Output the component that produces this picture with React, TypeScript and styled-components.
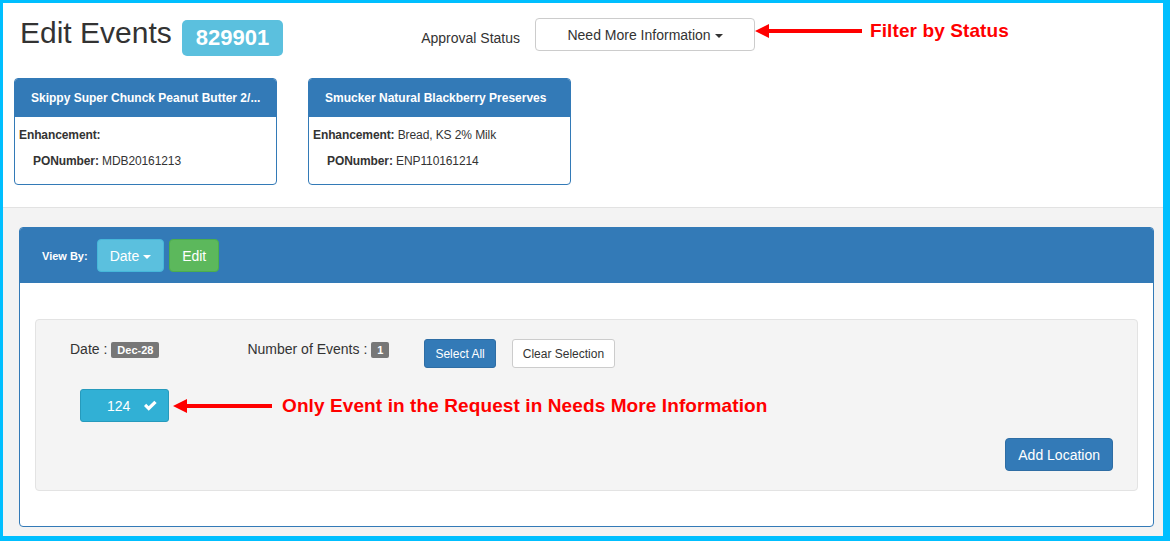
import React from 'react';
import styled, { createGlobalStyle } from 'styled-components';

const GlobalStyle = createGlobalStyle`
  html, body {
    margin: 0;
    padding: 0;
    background: #ffffff;
  }
  body {
    font-family: "Liberation Sans", Arial, sans-serif;
    font-size: 14px;
    color: #333333;
  }
  * {
    box-sizing: border-box;
  }
`;

const Frame = styled.div`
  width: 1170px;
  height: 541px;
  display: flex;
  flex-direction: column;
  border-style: solid;
  border-color: #00bfff;
  border-width: 3px 7px 5px 3px;
  overflow: hidden;
`;

const TopSection = styled.div`
  background: #ffffff;
  padding: 13px 0 22px;
  border-bottom: 1px solid #e2e2e2;
  box-shadow: 0 1px 2px rgba(0, 0, 0, 0.04);
`;

const TitleRow = styled.div`
  display: flex;
  align-items: flex-start;
  padding-left: 17px;
`;

const Title = styled.h1`
  margin: 0;
  font-size: 30px;
  line-height: 33px;
  font-weight: normal;
  color: #333333;
`;

const IdBadge = styled.span`
  margin: 4px 0 0 10px;
  height: 36px;
  padding: 0 14px;
  display: inline-flex;
  align-items: center;
  background: #5bc0de;
  color: #ffffff;
  font-size: 22px;
  font-weight: bold;
  border-radius: 5px;
`;

const StatusLabel = styled.span`
  margin: 12px 0 0 138px;
  font-size: 14px;
  line-height: 20px;
`;

const Caret = styled.span<{ $color?: string }>`
  display: inline-block;
  width: 0;
  height: 0;
  margin-left: 0;
  vertical-align: middle;
  border-top: 4px solid ${(p) => p.$color ?? '#333333'};
  border-left: 4px solid transparent;
  border-right: 4px solid transparent;
`;

const StatusDropdown = styled.button`
  margin: 2px 0 0 15px;
  width: 220px;
  height: 33px;
  background: #ffffff;
  border: 1px solid #cccccc;
  border-radius: 4px;
  font-family: inherit;
  font-size: 14px;
  color: #333333;
  padding: 0 12px;
`;

const Annotation = styled.div<{ $gap: number }>`
  display: flex;
  align-items: center;
  gap: ${(p) => p.$gap}px;
  height: 24px;
  margin-top: 3px;
  color: #ff0000;
  font-size: 19px;
  font-weight: bold;
  letter-spacing: 0.1px;
  white-space: nowrap;
`;

const CardRow = styled.div`
  display: flex;
  gap: 31px;
  margin-top: 22px;
  padding-left: 11px;
`;

const Card = styled.div`
  width: 263px;
  height: 107px;
  border: 1px solid #337ab7;
  border-radius: 4px;
  overflow: hidden;
  background: #ffffff;
`;

const CardHeader = styled.div`
  height: 38px;
  background: #337ab7;
  color: #ffffff;
  font-size: 12px;
  font-weight: bold;
  line-height: 38px;
  padding: 0 8px 0 16px;
  white-space: nowrap;
  overflow: hidden;
  text-overflow: ellipsis;
`;

const CardBody = styled.div`
  padding: 10px 4px;
  font-size: 12px;
  line-height: 17px;
`;

const CardLine = styled.div<{ $indent?: boolean }>`
  padding-left: ${(p) => (p.$indent ? 14 : 0)}px;
  letter-spacing: -0.1px;
  & + & {
    margin-top: 9px;
  }
  b {
    font-weight: bold;
  }
`;

const BottomSection = styled.div`
  flex: 1;
  display: flex;
  flex-direction: column;
  background: #f3f3f3;
  padding: 19px 9px 9px 16px;
`;

const Panel = styled.div`
  flex: 1;
  display: flex;
  flex-direction: column;
  background: #ffffff;
  border: 1px solid #337ab7;
  border-radius: 4px;
  overflow: hidden;
`;

const PanelHeading = styled.div`
  height: 55px;
  background: #337ab7;
  display: flex;
  align-items: center;
  padding-left: 22px;
  gap: 5px;
`;

const ViewByLabel = styled.span`
  color: #ffffff;
  font-size: 11px;
  font-weight: bold;
  margin-right: 4px;
`;

const Button = styled.button<{ $variant: 'primary' | 'info' | 'success' | 'default'; $size?: 'sm' | 'md' }>`
  font-family: inherit;
  font-size: ${(p) => (p.$size === 'sm' ? 12 : 14)}px;
  height: ${(p) => (p.$size === 'sm' ? 29 : 33)}px;
  padding: 0 ${(p) => (p.$size === 'sm' ? 10 : 12)}px;
  border-radius: ${(p) => (p.$size === 'sm' ? 3 : 4)}px;
  border: 1px solid
    ${(p) =>
      ({ primary: '#2e6da4', info: '#46b8da', success: '#4cae4c', default: '#cccccc' })[p.$variant]};
  background: ${(p) =>
    ({ primary: '#337ab7', info: '#5bc0de', success: '#5cb85c', default: '#ffffff' })[p.$variant]};
  color: ${(p) => (p.$variant === 'default' ? '#333333' : '#ffffff')};
  white-space: nowrap;
`;

const PanelBody = styled.div`
  flex: 1;
  padding: 36px 15px 35px;
  display: flex;
  flex-direction: column;
`;

const Well = styled.div`
  flex: 1;
  background: #f4f4f4;
  border: 1px solid #e3e3e3;
  border-radius: 4px;
  padding: 19px 24px 19px 34px;
  display: flex;
  flex-direction: column;
`;

const InfoRow = styled.div`
  display: flex;
  align-items: flex-start;
  height: 29px;
`;

const InfoText = styled.span<{ $offset?: number }>`
  font-size: 14px;
  line-height: 20px;
  margin-left: ${(p) => p.$offset ?? 0}px;
`;

const CountLabel = styled.span`
  margin: 3px 0 0 4px;
  height: 16px;
  padding: 0 6px;
  background: #777777;
  color: #ffffff;
  font-size: 11px;
  font-weight: bold;
  line-height: 16px;
  border-radius: 2px;
`;

const EventRow = styled.div`
  display: flex;
  align-items: center;
  margin: 21px 0 0 10px;
`;

const EventButton = styled.button`
  display: flex;
  align-items: center;
  gap: 14px;
  height: 33px;
  width: 89px;
  padding: 0 11px 0 26px;
  background: #31b0d5;
  border: 1px solid #269abc;
  border-radius: 3px;
  color: #ffffff;
  font-family: inherit;
  font-size: 14px;
`;

const FooterRow = styled.div`
  display: flex;
  justify-content: flex-end;
  margin-top: 16px;
`;

const RedArrow = ({ width }: { width: number }) => (
  <svg width={width} height="16" viewBox={`0 0 ${width} 16`}>
    <polygon points="0,8 14,1 14,15" fill="#ff0000" />
    <rect x="12" y="6" width={width - 12} height="4" fill="#ff0000" />
  </svg>
);

const CheckIcon = () => (
  <svg width="15" height="13" viewBox="0 0 15 13">
    <polygon points="0,7 2.6,4.4 5.6,7.4 12.2,0.8 15,3.5 5.6,12.8" fill="#ffffff" />
  </svg>
);

export default function App() {
  return (
    <>
      <GlobalStyle />
      <Frame>
        <TopSection>
          <TitleRow>
            <Title>Edit Events</Title>
            <IdBadge>829901</IdBadge>
            <StatusLabel>Approval Status</StatusLabel>
            <StatusDropdown>
              Need More Information <Caret />
            </StatusDropdown>
            <Annotation $gap={8}>
              <RedArrow width={107} />
              Filter by Status
            </Annotation>
          </TitleRow>
          <CardRow>
            <Card>
              <CardHeader>Skippy Super Chunck Peanut Butter 2/...</CardHeader>
              <CardBody>
                <CardLine>
                  <b>Enhancement:</b>
                </CardLine>
                <CardLine $indent>
                  <b>PONumber:</b> MDB20161213
                </CardLine>
              </CardBody>
            </Card>
            <Card>
              <CardHeader>Smucker Natural Blackberry Preserves</CardHeader>
              <CardBody>
                <CardLine>
                  <b>Enhancement:</b> Bread, KS 2% Milk
                </CardLine>
                <CardLine $indent>
                  <b>PONumber:</b> ENP110161214
                </CardLine>
              </CardBody>
            </Card>
          </CardRow>
        </TopSection>
        <BottomSection>
          <Panel>
            <PanelHeading>
              <ViewByLabel>View By:</ViewByLabel>
              <Button $variant="info">
                Date <Caret $color="#ffffff" />
              </Button>
              <Button $variant="success">Edit</Button>
            </PanelHeading>
            <PanelBody>
              <Well>
                <InfoRow>
                  <InfoText>Date :</InfoText>
                  <CountLabel>Dec-28</CountLabel>
                  <InfoText $offset={88}>Number of Events :</InfoText>
                  <CountLabel>1</CountLabel>
                  <Button $variant="primary" $size="sm" style={{ marginLeft: 35 }}>
                    Select All
                  </Button>
                  <Button $variant="default" $size="sm" style={{ marginLeft: 16 }}>
                    Clear Selection
                  </Button>
                </InfoRow>
                <EventRow>
                  <EventButton>
                    124 <CheckIcon />
                  </EventButton>
                  <Annotation $gap={10} style={{ marginTop: 0, marginLeft: 4 }}>
                    <RedArrow width={99} />
                    Only Event in the Request in Needs More Information
                  </Annotation>
                </EventRow>
                <FooterRow>
                  <Button $variant="primary">Add Location</Button>
                </FooterRow>
              </Well>
            </PanelBody>
          </Panel>
        </BottomSection>
      </Frame>
    </>
  );
}
